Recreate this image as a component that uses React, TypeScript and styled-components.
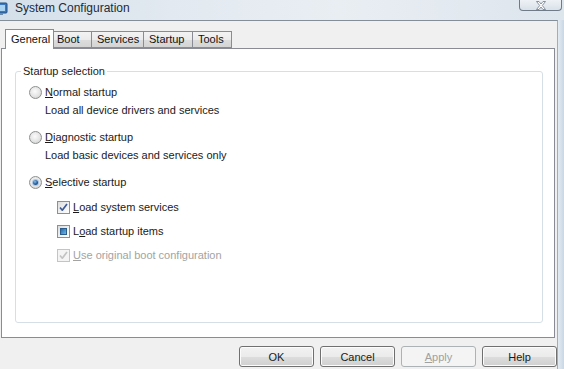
import styled, { createGlobalStyle } from "styled-components";

const GlobalStyle = createGlobalStyle`
  html, body {
    margin: 0;
    padding: 0;
  }
  body {
    font-family: "Liberation Sans", Arial, sans-serif;
    font-size: 11px;
    color: #1a1a1a;
  }
`;

const Window = styled.div`
  width: 564px;
  height: 369px;
  display: flex;
  flex-direction: column;
  background: #f0f0f0;
  overflow: hidden;
`;

const TitleBar = styled.div`
  height: 20px;
  flex-shrink: 0;
  display: flex;
  align-items: flex-start;
  background: linear-gradient(
    to right,
    #d3dfea 0%,
    #e2e9f0 30%,
    #e9eef3 60%,
    #dde5ed 100%
  );
`;

const AppIcon = styled.svg`
  width: 16px;
  height: 14px;
  margin: 2px 0 0 -8px;
  flex-shrink: 0;
`;

const Title = styled.div`
  margin-left: 7px;
  padding-top: 1px;
  font-size: 12px;
  line-height: 15px;
  color: #1e2a36;
`;

const CloseButton = styled.div`
  margin-left: auto;
  margin-right: 2px;
  width: 43px;
  height: 11px;
  box-sizing: border-box;
  border: 1px solid #6f7b88;
  border-top: none;
  border-radius: 0 0 4px 4px;
  background: linear-gradient(to bottom, #eef2f6, #d9e1e9);
  display: flex;
  align-items: center;
  justify-content: center;
`;

const Body = styled.div`
  flex: 1;
  display: flex;
  min-height: 0;
`;

const Client = styled.div`
  flex: 1;
  display: flex;
  flex-direction: column;
  border-top: 1px solid #848e99;
  border-right: 1px solid #a3adb7;
  padding: 8px 2px 0 1px;
  min-width: 0;
`;

const FrameEdge = styled.div`
  width: 6px;
  flex-shrink: 0;
  background: linear-gradient(to right, #e4ebf2, #c9d7e5);
`;

const TabStrip = styled.div`
  display: flex;
  align-items: flex-end;
  height: 19px;
  padding-left: 4px;
`;

const Tab = styled.div<{ $active?: boolean; $width: number }>`
  box-sizing: border-box;
  width: ${(p) => p.$width}px;
  height: ${(p) => (p.$active ? 20 : 17)}px;
  margin-bottom: ${(p) => (p.$active ? -1 : 0)}px;
  margin-left: ${(p) => (p.$active ? -2 : -1)}px;
  margin-right: ${(p) => (p.$active ? -2 : 0)}px;
  padding-left: 5px;
  border: 1px solid #898c95;
  border-bottom: ${(p) => (p.$active ? "none" : "1px solid #898c95")};
  background: ${(p) =>
    p.$active
      ? "#ffffff"
      : "linear-gradient(to bottom, #f3f3f3 0%, #ebebeb 50%, #dddddd 51%, #d4d4d4 100%)"};
  position: relative;
  z-index: ${(p) => (p.$active ? 1 : 0)};
  line-height: ${(p) => (p.$active ? 18 : 15)}px;
  color: #111;
  white-space: nowrap;

  &:first-child {
    margin-left: 0;
  }
`;

const Panel = styled.div`
  flex: 1;
  display: flex;
  background: #ffffff;
  border: 1px solid #898c95;
  padding: 15px 11px 14px 13px;
  min-height: 0;
`;

const GroupBox = styled.fieldset`
  flex: 1;
  margin: 0;
  padding: 0 12px 0 5px;
  border: 1px solid #d5dfe5;
  border-radius: 3px;
  min-width: 0;
`;

const Legend = styled.legend`
  padding: 0 2px;
  line-height: 14px;
  color: #1a1a1a;
`;

const Options = styled.div`
  display: flex;
  flex-direction: column;
  padding: 6px 0 0 8px;
`;

const OptionBlock = styled.div`
  display: flex;
  flex-direction: column;
  margin-bottom: 11px;
`;

const Row = styled.label<{ $disabled?: boolean }>`
  display: flex;
  align-items: center;
  gap: 2px;
  height: 16px;
  line-height: 16px;
  color: ${(p) => (p.$disabled ? "#a3a3a3" : "#1a1a1a")};
`;

const Description = styled.div`
  padding-left: 16px;
  margin-top: 2px;
  line-height: 16px;
`;

const CheckList = styled.div`
  display: flex;
  flex-direction: column;
  gap: 8px;
  padding-left: 28px;
  margin-top: -2px;
`;

const RadioDot = styled.span<{ $checked?: boolean }>`
  width: 13px;
  height: 13px;
  box-sizing: border-box;
  border-radius: 50%;
  border: 1px solid #8e8f8f;
  background: radial-gradient(
    circle at 45% 40%,
    #fbfbfb 0%,
    #e4e4e4 55%,
    #c8c8c8 100%
  );
  display: flex;
  align-items: center;
  justify-content: center;
  flex-shrink: 0;
  margin-right: 1px;

  &::after {
    content: "";
    display: ${(p) => (p.$checked ? "block" : "none")};
    width: 5px;
    height: 5px;
    border-radius: 50%;
    background: radial-gradient(circle at 40% 35%, #8cc0ea, #1f5a9c 55%, #123f74);
    box-shadow: 0 0 0 1px #a9c6e4;
  }
`;

const CheckBox = styled.span<{ $disabled?: boolean }>`
  width: 13px;
  height: 13px;
  box-sizing: border-box;
  border: 1px solid ${(p) => (p.$disabled ? "#c4c4c4" : "#8e8f8f")};
  background: ${(p) =>
    p.$disabled
      ? "#f4f4f4"
      : "linear-gradient(135deg, #dcdcdc 0%, #f0f0f0 50%, #fdfdfd 100%)"};
  display: flex;
  align-items: center;
  justify-content: center;
  flex-shrink: 0;
  margin-right: 1px;
`;

const Indeterminate = styled.span`
  width: 7px;
  height: 7px;
  box-sizing: border-box;
  border: 1px solid #2c5c8c;
  background: linear-gradient(135deg, #2a6aa3, #4f9ad3 60%, #6bb6e6);
`;

const Footer = styled.div`
  height: 31px;
  flex-shrink: 0;
  display: flex;
  justify-content: flex-end;
  align-items: flex-start;
  gap: 6px;
  padding-top: 8px;
  margin-right: -2px;
  box-sizing: border-box;
`;

const Button = styled.button<{ $disabled?: boolean }>`
  width: 75px;
  height: 21px;
  padding: 0;
  font-family: inherit;
  font-size: 11px;
  border-radius: 3px;
  border: 1px solid ${(p) => (p.$disabled ? "#adb2b5" : "#707070")};
  background: ${(p) =>
    p.$disabled
      ? "#f4f4f4"
      : "linear-gradient(to bottom, #f2f2f2 0%, #ebebeb 50%, #dddddd 51%, #cfcfcf 100%)"};
  color: ${(p) => (p.$disabled ? "#a0a0a0" : "#1a1a1a")};
  box-shadow: inset 0 0 0 1px ${(p) => (p.$disabled ? "transparent" : "#fcfcfc")};
`;

const tabs = [
  { label: "General", width: 49, active: true },
  { label: "Boot", width: 41 },
  { label: "Services", width: 53 },
  { label: "Startup", width: 50 },
  { label: "Tools", width: 40 },
];

const CheckMark = ({ color }: { color: string }) => (
  <svg width="9" height="9" viewBox="0 0 9 9">
    <path
      d="M1 4.5 L3.3 7.2 L8 1"
      fill="none"
      stroke={color}
      strokeWidth="1.7"
      strokeLinejoin="round"
    />
  </svg>
);

const App = () => {
  return (
    <>
      <GlobalStyle />
      <Window>
        <TitleBar>
          <AppIcon viewBox="0 0 16 14">
            <rect x="1" y="1" width="14" height="10" rx="1" fill="#3b78c4" stroke="#23507f" />
            <rect x="3" y="3" width="10" height="6" fill="#a9d2f2" />
            <rect x="5" y="11" width="6" height="2" fill="#6f8aa6" />
          </AppIcon>
          <Title>System Configuration</Title>
          <CloseButton>
            <svg width="12" height="9" viewBox="0 0 12 9">
              <path
                d="M1.5 0.5 H4 L6 3 L8 0.5 H10.5 L7.3 4.5 L10.5 8.5 H8 L6 6 L4 8.5 H1.5 L4.7 4.5 Z"
                fill="#ffffff"
                stroke="#7c8794"
                strokeWidth="0.9"
              />
            </svg>
          </CloseButton>
        </TitleBar>
        <Body>
          <Client>
            <TabStrip>
              {tabs.map((t) => (
                <Tab key={t.label} $active={t.active} $width={t.width}>
                  {t.label}
                </Tab>
              ))}
            </TabStrip>
            <Panel>
              <GroupBox>
                <Legend>Startup selection</Legend>
                <Options>
                  <OptionBlock>
                    <Row>
                      <RadioDot />
                      <span>
                        <u>N</u>ormal startup
                      </span>
                    </Row>
                    <Description>Load all device drivers and services</Description>
                  </OptionBlock>
                  <OptionBlock>
                    <Row>
                      <RadioDot />
                      <span>
                        <u>D</u>iagnostic startup
                      </span>
                    </Row>
                    <Description>Load basic devices and services only</Description>
                  </OptionBlock>
                  <OptionBlock>
                    <Row>
                      <RadioDot $checked />
                      <span>
                        <u>S</u>elective startup
                      </span>
                    </Row>
                  </OptionBlock>
                  <CheckList>
                    <Row>
                      <CheckBox>
                        <CheckMark color="#3c5a99" />
                      </CheckBox>
                      <span>
                        <u>L</u>oad system services
                      </span>
                    </Row>
                    <Row>
                      <CheckBox>
                        <Indeterminate />
                      </CheckBox>
                      <span>
                        L<u>o</u>ad startup items
                      </span>
                    </Row>
                    <Row $disabled>
                      <CheckBox $disabled>
                        <CheckMark color="#c3c3c3" />
                      </CheckBox>
                      <span>
                        <u>U</u>se original boot configuration
                      </span>
                    </Row>
                  </CheckList>
                </Options>
              </GroupBox>
            </Panel>
            <Footer>
              <Button>OK</Button>
              <Button>Cancel</Button>
              <Button $disabled>
                <u>A</u>pply
              </Button>
              <Button>Help</Button>
            </Footer>
          </Client>
          <FrameEdge />
        </Body>
      </Window>
    </>
  );
};

export default App;
